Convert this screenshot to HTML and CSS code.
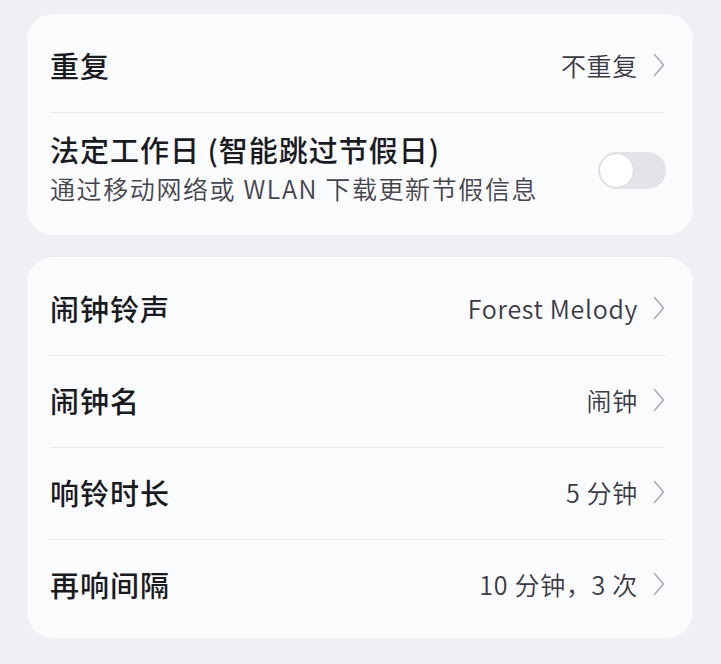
FILE: index.html
```html
<!DOCTYPE html>
<html lang="zh-CN">
<head>
<meta charset="utf-8">
<link rel="stylesheet" href="styles.css">
</head>
<body>
<div class="page">
  <section class="card">
    <div class="row">
      <div class="label">重复</div>
      <div class="value">不重复<svg class="chev" viewBox="0 0 12 24"><path d="M1.5 1.5 L10.5 12 L1.5 22.5"/></svg></div>
    </div>
    <div class="row tall">
      <div class="text">
        <div class="label">法定工作日 (智能跳过节假日)</div>
        <div class="sub">通过移动网络或 WLAN 下载更新节假信息</div>
      </div>
      <div class="toggle"><span class="knob"></span></div>
    </div>
  </section>
  <section class="card">
    <div class="row">
      <div class="label">闹钟铃声</div>
      <div class="value">Forest Melody<svg class="chev" viewBox="0 0 12 24"><path d="M1.5 1.5 L10.5 12 L1.5 22.5"/></svg></div>
    </div>
    <div class="row">
      <div class="label">闹钟名</div>
      <div class="value">闹钟<svg class="chev" viewBox="0 0 12 24"><path d="M1.5 1.5 L10.5 12 L1.5 22.5"/></svg></div>
    </div>
    <div class="row">
      <div class="label">响铃时长</div>
      <div class="value">5 分钟<svg class="chev" viewBox="0 0 12 24"><path d="M1.5 1.5 L10.5 12 L1.5 22.5"/></svg></div>
    </div>
    <div class="row">
      <div class="label">再响间隔</div>
      <div class="value">10 分钟，3 次<svg class="chev" viewBox="0 0 12 24"><path d="M1.5 1.5 L10.5 12 L1.5 22.5"/></svg></div>
    </div>
  </section>
</div>
</body>
</html>
```
FILE: styles.css
```css
* { box-sizing: border-box; }
html, body {
  margin: 0;
  padding: 0;
  background: #eef0f3;
}
body {
  font-family: "Noto Sans CJK SC", "Noto Sans", sans-serif;
  color: #1b1a1f;
}
.page {
  padding: 14px 28px 0 27px;
  display: flex;
  flex-direction: column;
  gap: 22px;
}
.card {
  background: #fafbfd;
  border-radius: 26px;
  padding: 7px 28px 6px 23px;
  box-shadow: 0 0 2px rgba(0,0,0,0.02);
}
.card:first-child {
  padding-bottom: 8px;
}
.row {
  height: 92px;
  padding-bottom: 4px;
  display: flex;
  align-items: center;
  justify-content: space-between;
  border-bottom: 1px solid #e5e7eb;
}
.row:last-child {
  border-bottom: none;
}
.row.tall {
  height: 114px;
  padding-bottom: 0;
}
.label {
  font-size: 29px;
  font-weight: 500;
  line-height: 38px;
  letter-spacing: 1px;
}
.sub {
  font-size: 25px;
  font-weight: 350;
  line-height: 40px;
  color: #46444c;
  letter-spacing: 1.6px;
}
.text {
  display: flex;
  flex-direction: column;
  padding-bottom: 2px;
}
.value {
  display: flex;
  align-items: center;
  font-size: 25px;
  font-weight: 350;
  color: #3b3944;
  letter-spacing: 0.7px;
}
.chev {
  width: 12px;
  height: 24px;
  margin-left: 15px;
  fill: none;
  stroke: #a9a9b0;
  stroke-width: 1.5;
  stroke-linecap: round;
  stroke-linejoin: round;
}
.toggle {
  width: 68px;
  height: 37px;
  border-radius: 19px;
  background: #e3e4e7;
  padding: 1px;
  display: flex;
  align-items: center;
  margin-right: -1px;
}
.knob {
  width: 35px;
  height: 35px;
  border-radius: 50%;
  background: #ffffff;
  border: 1px solid #d6d7db;
}
```
